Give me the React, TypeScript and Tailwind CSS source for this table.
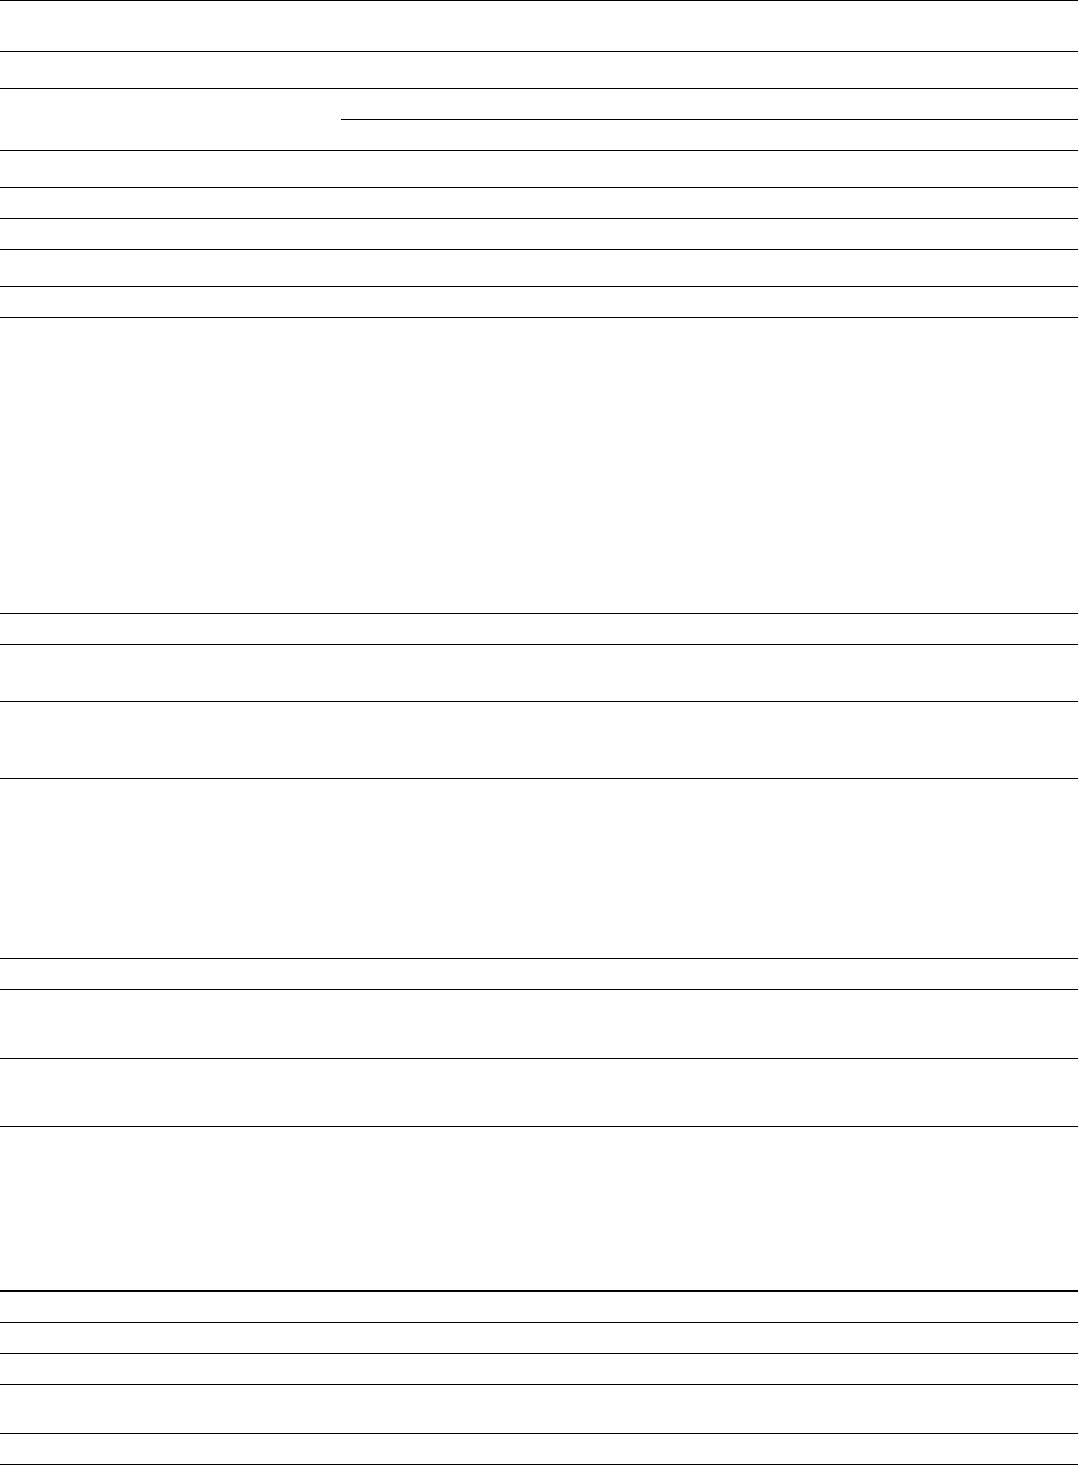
import React from 'react';

// heights measured from one rule to the next, written out so Tailwind picks them up
const before = ['h-[51px]', 'h-[37px]'];
const after = [
  'h-[37px]', 'h-[31px]', 'h-[31px]', 'h-[37px]', 'h-[31px]', 'h-[296px]', 'h-[31px]',
  'h-[57px]', 'h-[77px]', 'h-[180px]', 'h-[31px]', 'h-[69px]', 'h-[68px]', 'h-[164px]',
];
const tail = ['h-[31px]', 'h-[31px]', 'h-[49px]', 'h-[31px]'];

const Row = ({ h }: { h: string }) => <div className={`${h} border-t border-black`} />;

export default function App() {
  return (
    <div className="min-h-screen bg-white">
      <div className="w-[1078px] border-b border-black">
        {before.map((h, i) => (
          <Row key={`b${i}`} h={h} />
        ))}
        <div className="flex h-[62px] border-t border-black">
          <div className="w-[341px]" />
          <div className="flex flex-1 flex-col">
            <div className="h-[30px]" />
            <div className="h-[31px] border-t border-black" />
          </div>
        </div>
        {after.map((h, i) => (
          <Row key={`a${i}`} h={h} />
        ))}
        <div className="h-[32px] border-t-2 border-black" />
        {tail.map((h, i) => (
          <Row key={`t${i}`} h={h} />
        ))}
      </div>
    </div>
  );
}
